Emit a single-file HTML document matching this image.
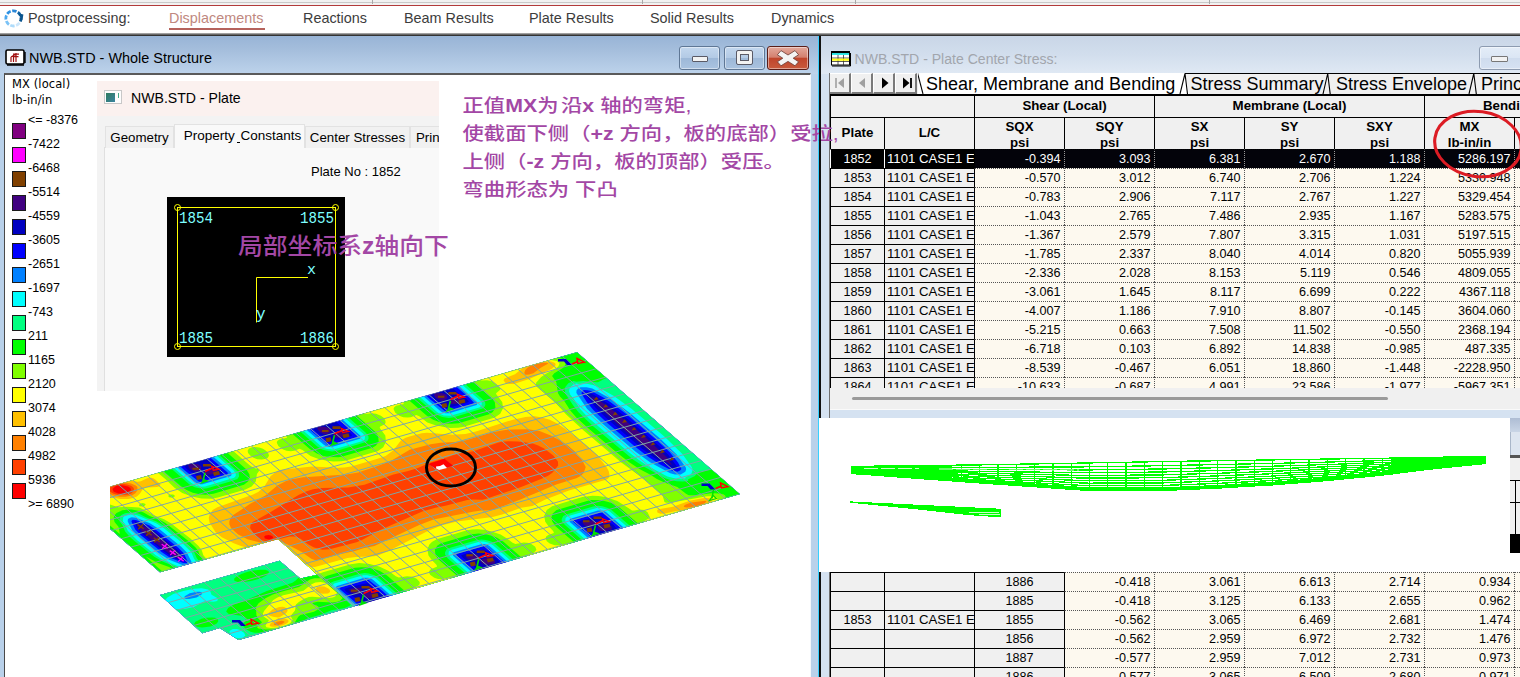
<!DOCTYPE html><html lang="zh"><head><meta charset="utf-8"><title>NWB.STD - Postprocessing</title><style>
*{box-sizing:border-box;margin:0;padding:0}
html,body{width:1520px;height:677px;overflow:hidden;background:#fff;font-family:"Liberation Sans","Noto Sans CJK SC",sans-serif}
body{position:relative}
body>div,body>svg{position:absolute}
#topstrip{left:0;top:0;width:1520px;height:5px;background:#f1f1f1}
#topline1{left:0;top:2px;width:1520px;height:1px;background:#c9c9c9}
.tsep{top:0;width:1px;height:4px;background:#a8a8a8}
#redline{left:0;top:5px;width:1520px;height:1px;background:#b23a3a}
#menubar{left:0;top:6px;width:1520px;height:27px;background:#fff}
#menubar .mi{position:absolute;top:4px;font-size:14.4px;line-height:17px;color:#3c3c3c;white-space:nowrap}
#menubar .mi.act{color:#c08880}
#actline{position:absolute;left:169px;top:22px;width:96px;height:2px;background:#b5625c}
#ppicon{position:absolute;left:3.3px;top:2px}
#menushadow{left:0;top:33px;width:1520px;height:3px;background:linear-gradient(#bdbdbd,#555 60%,#1a1a1a)}
#lwin{left:0;top:36px;width:819px;height:641px;background:#b9d1ea;border-right:1px solid #38d0ff}
#ltitle{position:absolute;left:0;top:0;width:818px;height:38px;background:linear-gradient(#98b4d6 0%,#a6bfdd 40%,#bdd3eb 100%)}
#licon{position:absolute;left:5px;top:13px}
.wt{position:absolute;left:29px;top:14px;font-size:14.45px;line-height:17px;color:#000;white-space:nowrap}
.wt.dim{color:#a2a6ad}
.wb{position:absolute;top:10px;height:24px;border:1px solid #5f7795;border-radius:3px;background:linear-gradient(#c3d7ee 0%,#b3cae5 48%,#9db8d8 52%,#aac3e0 100%);box-shadow:inset 0 0 0 1px rgba(255,255,255,.45)}
.wb.close{border-color:#5a1d18;background:linear-gradient(#e3a99c 0%,#d4806f 46%,#c0452c 52%,#c85a3c 100%)}
.wb.close svg{position:absolute;left:-1px;top:-1px}
.minbar{position:absolute;left:11.5px;top:8.5px;width:16px;height:6px;background:#f2f2f2;border:1px solid #5a5a66;border-radius:1px}
.maxbox{position:absolute;left:12px;top:4px;width:15px;height:13px;border:3.4px solid #f2f2f2;outline:1px solid #5a5a66;box-shadow:inset 0 0 0 1px #5a5a66;border-radius:1px}
#lclient{position:absolute;left:4px;top:37px;width:807px;height:604px;background:#fff;border-left:1px solid #4a4a4a;border-top:2px solid #5a5a5a;border-right:1px solid #f4f8fc;overflow:hidden}
#lclient>*{position:absolute}
#legend{left:0;top:0;width:96px;height:470px;font-family:"DejaVu Sans","Liberation Sans",sans-serif}
#legend>*{position:absolute}
.lt{left:7px;font-size:11.5px;line-height:14px;color:#000;white-space:nowrap;letter-spacing:0.1px}
.ll{left:23px;font-size:12.5px;line-height:14px;color:#000;white-space:nowrap;font-family:'Liberation Sans',sans-serif}
.ls{left:7px;width:14px;height:16px;border:1px solid #1a1a1a}
#pwin{left:92px;top:6px;width:342px;height:310px;background:#f3f3f3;overflow:hidden}
#ptitle{position:absolute;left:0;top:0;width:342px;height:35px;background:#fbf1ef}
#ptitle span{position:absolute;left:34px;top:9px;font-size:14.1px;line-height:17px;color:#000;white-space:nowrap}
#picon{position:absolute;left:7px;top:9px;width:18px;height:14px;border:1px solid #c8c8c8;background:#fdfdfd}
#picon i{position:absolute;left:1px;top:2px;width:9px;height:9px;background:linear-gradient(135deg,#2f7a5e,#3a83a0)}
#picon b{position:absolute;left:13px;top:2px;width:1px;height:5px;background:#4a8}
#pbody{position:absolute;left:0;top:35px;width:342px;height:275px;background:#f3f3f3}
#ppanel{position:absolute;left:7px;top:31px;width:335px;height:244px;background:#f9f9f9;border-left:1px solid #e0e0e0;border-top:1px solid #dedede}
.tab{position:absolute;top:10px;height:22px;font-size:13.3px;line-height:22px;text-align:center;color:#000;background:#f1f1f1;border:1px solid #e2e2e2;border-bottom:none;white-space:nowrap;overflow:hidden}
.tab.on{top:8px;height:24px;background:#f9f9f9;line-height:22px;z-index:2;font-size:13.5px;padding-left:6px}
.tab u{text-decoration:none;display:inline-block;width:3px;height:1px;background:#000;vertical-align:-3px;margin:0 0 0 -1px}
#pno{position:absolute;left:214px;top:48px;font-size:13px;line-height:15px;white-space:nowrap}
#pbox{position:absolute;left:70px;top:81px;width:178px;height:160px}
#note1{left:238px;top:233px;z-index:5;transform:scaleY(0.93);transform-origin:0 0;font-weight:500;font-size:24.8px;line-height:30px;color:#a347a5;white-space:nowrap;font-family:"Liberation Sans","Noto Sans CJK SC",sans-serif}
#note2{left:462.5px;top:92px;z-index:5;font-weight:500;font-size:21.33px;line-height:32.94px;transform:scaleY(0.85);transform-origin:0 0;color:#a347a5;white-space:nowrap}
#note2 div{height:32.94px}#note2 i{display:inline-block;width:2.5px}
#rwin{left:819px;top:36px;width:701px;height:641px;background:#d5e2f1;border-left:2px solid #111}
#rtitle{position:absolute;left:0px;top:0;width:700px;height:38px;background:linear-gradient(#c9d6e7 0%,#d2deed 50%,#e0e9f4 100%)}
#ricon{position:absolute;left:9.5px;top:15px}
#rtitle .wt{left:33.5px;top:14.5px;font-size:14.05px}
#rclient{position:absolute;left:8px;top:37px;width:691px;height:604px;background:#d5e2f1;overflow:hidden;border-left:1px solid #707070}
#rclient>*{position:absolute}
#tabrow{left:0;top:0;width:690px;height:21px;background:#f0f0f0}
.nb{position:absolute;top:0;margin-left:-1px;width:22px;height:21px;background:#f0f0f0;border:1px solid #fff;border-right:2px solid #7a7a7a;border-bottom:2px solid #7a7a7a}
.nb svg{position:absolute;left:0;top:0}
#tabs{position:absolute;left:88px;top:0;width:620px;height:21px;overflow:hidden}
#tabs span{position:absolute;top:1px;margin-left:-1px;font-size:18px;line-height:21px;color:#000;white-space:nowrap}
#ttab{left:0;top:21px;width:690px;height:294px;overflow:hidden;background:#fdf9ef;border-top:1px solid #000}
#ttab>*,#btab>*{position:absolute}
.hc{background:#f0f0f0;border-left:1px solid #000;border-top:1px solid #000;font-weight:bold;font-size:13.3px;line-height:20px;text-align:center;color:#000;white-space:nowrap;overflow:hidden}
.hc.h1{line-height:30px}
.hc.h2{line-height:15px;padding-top:1px}
.hc.h2 div{height:16px}
.rc{height:19px;background:#f0f0f0;border-left:1px solid #000;border-top:1px solid #000;font-size:12.6px;line-height:18.5px;text-align:center;color:#000;white-space:nowrap;overflow:hidden}
.rc.lc{text-align:left;padding-left:2px;font-size:13.2px}
.rc.sel{background:#000;color:#fff;border-left-color:#fff}
.dc{height:19px;background:#fdf9ef;border-left:1px dotted #555;border-top:1px dotted #555;font-size:12.6px;line-height:18.5px;text-align:right;padding-right:3.5px;color:#000;white-space:nowrap;overflow:hidden}
.dc.sel{background:#03030a;color:#fff;border-left-color:#999;border-top-color:#000}
#hscroll{left:0;top:315px;width:690px;height:22px;background:#f0f0f0;border-bottom:1px solid #fafafa}
#thumb{position:absolute;left:22px;top:9px;width:536px;height:3px;border-radius:2px;background:#9a9a9a}
#white{left:819px;top:418px;width:701px;height:154px;background:#fff;z-index:3}
#art{left:1510px;top:418px;width:10px;height:154px;z-index:4}
#art div{position:absolute;left:0;width:10px}
#btab{left:0;top:499px;width:690px;height:105px;overflow:hidden;background:#fdf9ef}
#redcirc{left:592px;top:36px}

#vline{left:819px;top:118px;width:2px;height:40px;background:#111;z-index:6}
.wb.dimb{border-color:#8d9bb0;background:linear-gradient(#e4edf8 0%,#dbe6f4 48%,#cfdcee 52%,#d6e2f2 100%)}
.wb.dimb .minbar{border-color:#777}
.dc.f1{border-left:1px solid #000}

</style></head><body>
<div id="topstrip"></div><div id="topline1"></div><div class="tsep" style="left:372px"></div><div class="tsep" style="left:642px"></div><div class="tsep" style="left:855px"></div><div class="tsep" style="left:1209px"></div><div id="redline"></div>
<div id="menubar">
<svg id="ppicon" width="21" height="21" viewBox="0 0 21 21"><g fill="none"><path d="M9.21 2.89A7.6 7.6 0 0 1 13.49 3.46" stroke="#2a86d6" stroke-width="2.8"/><path d="M14.87 4.25A7.6 7.6 0 0 1 17.50 7.68" stroke="#0f64a8" stroke-width="2.8"/><path d="M17.91 9.21A7.6 7.6 0 0 1 17.34 13.49" stroke="#0a558f" stroke-width="2.8"/><path d="M16.55 14.87A7.6 7.6 0 0 1 13.12 17.50" stroke="#cbe6fb" stroke-width="2.8"/><path d="M11.59 17.91A7.6 7.6 0 0 1 7.31 17.34" stroke="#aedbfa" stroke-width="2.8"/><path d="M5.93 16.55A7.6 7.6 0 0 1 3.30 13.12" stroke="#7cc3f6" stroke-width="2.8"/><path d="M2.89 11.59A7.6 7.6 0 0 1 3.46 7.31" stroke="#4aa7ef" stroke-width="2.8"/><path d="M4.25 5.93A7.6 7.6 0 0 1 7.68 3.30" stroke="#2f92e3" stroke-width="2.8"/></g><path d="M15.2 5.2L20.4 6.6L19.4 12.2L17.2 9.2Z" fill="#0a558f"/></svg>
<span class="mi" style="left:28px">Postprocessing:</span>
<span class="mi act" style="left:169px">Displacements</span>
<span class="mi" style="left:303px">Reactions</span>
<span class="mi" style="left:404px">Beam Results</span>
<span class="mi" style="left:529px">Plate Results</span>
<span class="mi" style="left:650px">Solid Results</span>
<span class="mi" style="left:771px">Dynamics</span>
<div id="actline"></div>
</div><div id="menushadow"></div>
<div id="lwin"><div id="ltitle"><svg id="licon" width="22" height="18" viewBox="0 0 22 18"><rect x="1" y="1" width="18" height="14" rx="1.5" fill="#fff" stroke="#000" stroke-width="1.6"/><path d="M2 16 H19 M20 3 V14" stroke="#000" stroke-width="1.4" fill="none"/><path d="M6 13 V8 M8.5 13 V6.5 M11 13 V5 M6 8 L11 5 M8 5.2 H14 M9 7.6 H13.5 M11 5 V4" stroke="#a01010" stroke-width="1.2" fill="none"/></svg><span class="wt">NWB.STD - Whole Structure</span>
<div class="wb" style="left:679px;width:41px"><div class="minbar"></div></div>
<div class="wb" style="left:723.5px;width:41px"><div class="maxbox"></div></div>
<div class="wb close" style="left:767px;width:42px"><svg width="42" height="24" viewBox="0 0 42 24"><path d="M14 4.6 L21 9.0 L28 4.6 L31.6 8.8 L26.2 12.2 L31.6 15.8 L28 19.8 L21 15.4 L14 19.8 L10.4 15.8 L15.8 12.2 L10.4 8.8 Z" fill="#f4f4f4" stroke="#6a3a32" stroke-width="0.8"/></svg></div>
</div>
<div id="lclient">
<div id="legend"><div class="lt" style="top:2px">MX (local)</div><div class="lt" style="top:18px">lb-in/in</div>
<div class="ll" style="top:37.5px">&lt;= -8376</div>
<div class="ls" style="top:48px;background:#800080"></div>
<div class="ll" style="top:61.5px">-7422</div>
<div class="ls" style="top:72px;background:#ff00ff"></div>
<div class="ll" style="top:85.5px">-6468</div>
<div class="ls" style="top:96px;background:#804000"></div>
<div class="ll" style="top:109.5px">-5514</div>
<div class="ls" style="top:120px;background:#400080"></div>
<div class="ll" style="top:133.5px">-4559</div>
<div class="ls" style="top:144px;background:#0000c0"></div>
<div class="ll" style="top:157.5px">-3605</div>
<div class="ls" style="top:168px;background:#0000ff"></div>
<div class="ll" style="top:181.5px">-2651</div>
<div class="ls" style="top:192px;background:#0080ff"></div>
<div class="ll" style="top:205.5px">-1697</div>
<div class="ls" style="top:216px;background:#00ffff"></div>
<div class="ll" style="top:229.5px">-743</div>
<div class="ls" style="top:240px;background:#00ff80"></div>
<div class="ll" style="top:253.5px">211</div>
<div class="ls" style="top:264px;background:#00ff00"></div>
<div class="ll" style="top:277.5px">1165</div>
<div class="ls" style="top:288px;background:#80ff00"></div>
<div class="ll" style="top:301.5px">2120</div>
<div class="ls" style="top:312px;background:#ffff00"></div>
<div class="ll" style="top:325.5px">3074</div>
<div class="ls" style="top:336px;background:#ffc000"></div>
<div class="ll" style="top:349.5px">4028</div>
<div class="ls" style="top:360px;background:#ff8000"></div>
<div class="ll" style="top:373.5px">4982</div>
<div class="ls" style="top:384px;background:#ff4000"></div>
<div class="ll" style="top:397.5px">5936</div>
<div class="ls" style="top:408px;background:#ff0000"></div>
<div class="ll" style="top:421.5px">&gt;= 6890</div>
</div>
<svg id="plot" width="700" height="320" viewBox="100 345 700 320" style="left:95px;top:270px">
<defs><clipPath id="crop"><rect x="110" y="345" width="700" height="320"/></clipPath><clipPath id="slab"><path d="M-0.00 0.00L34.50 0.00L34.50 9.55L26.45 9.62L26.54 14.09L27.64 13.98L27.65 11.72L35.83 11.70L35.92 16.51L34.71 16.48L34.45 18.15L0.00 18.00Z"/></clipPath></defs>
<g clip-path="url(#crop)"><g transform="matrix(-14.5938 4.2031 9.0556 7.8889 577.00 352.00)"><g clip-path="url(#slab)">
<rect x="-1" y="-1" width="39" height="21" fill="#400080"/>
<path d="M-0.50 -0.50L37.00 -0.50L37.00 19.00L-0.50 19.00ZM1.90 4.61L1.80 4.84L1.70 5.34L1.60 6.20L1.52 10.00L1.60 12.50L1.80 13.41L2.00 12.53L2.10 11.67L2.17 8.10L2.10 5.70ZM8.66 1.40L8.68 1.60L8.90 1.66L9.30 1.62L9.55 1.50L9.45 1.20L9.10 1.06L8.80 1.09ZM9.70 0.06L9.39 0.20L9.25 0.50L9.40 0.83L9.70 0.95L9.80 0.95L9.90 0.82L9.98 0.50L9.90 0.18L9.80 0.06ZM16.66 1.40L16.68 1.60L16.90 1.66L17.30 1.62L17.55 1.50L17.45 1.20L17.10 1.06L16.80 1.09ZM17.70 0.06L17.39 0.20L17.25 0.50L17.40 0.83L17.70 0.95L17.80 0.95L17.90 0.82L17.98 0.50L17.90 0.18L17.80 0.06ZM24.60 17.25L24.55 17.60L24.70 17.87L25.10 17.85L25.30 17.72L25.38 17.60L25.35 17.30L25.20 17.15L24.70 17.13ZM25.12 16.50L25.15 16.80L25.30 16.99L25.50 17.06L25.70 17.04L25.86 16.70L25.80 16.37L25.40 16.37ZM25.51 1.40L25.54 1.60L25.70 1.65L26.10 1.63L26.40 1.50L26.37 1.30L26.30 1.20L26.00 1.06L25.60 1.11ZM26.50 0.07L26.30 0.15L26.16 0.30L26.12 0.60L26.30 0.88L26.50 0.95L26.70 0.94L26.83 0.60L26.83 0.40L26.70 0.07ZM32.80 4.21L32.60 4.67L32.50 5.15L32.40 6.79L32.40 8.10L32.47 8.60L32.60 8.99L32.80 8.53L32.90 8.05L33.00 6.41L33.00 5.10L32.93 4.60ZM8.60 17.25L8.55 17.60L8.70 17.87L9.10 17.85L9.30 17.72L9.38 17.60L9.35 17.30L9.20 17.15L8.70 17.13ZM9.12 16.50L9.15 16.80L9.30 16.99L9.50 17.06L9.70 17.04L9.86 16.70L9.80 16.37L9.40 16.37ZM16.60 17.25L16.55 17.60L16.70 17.87L17.10 17.85L17.30 17.72L17.38 17.60L17.35 17.30L17.20 17.15L16.70 17.13ZM17.12 16.50L17.15 16.80L17.30 16.99L17.50 17.06L17.70 17.04L17.86 16.70L17.80 16.37L17.40 16.37Z" fill="#0000c0" fill-rule="evenodd"/>
<path d="M-0.50 -0.50L8.55 -0.50L8.54 0.80L8.46 1.40L8.48 1.70L8.54 1.80L9.00 1.84L10.00 1.76L10.06 1.70L10.07 1.10L10.17 0.50L10.05 -0.50L16.55 -0.50L16.54 0.80L16.46 1.40L16.48 1.70L16.54 1.80L17.00 1.84L18.00 1.76L18.06 1.70L18.07 1.10L18.17 0.50L18.05 -0.50L25.40 -0.50L25.39 0.80L25.32 1.60L25.40 1.80L25.80 1.84L26.80 1.76L26.91 1.70L26.92 1.10L27.02 0.50L26.90 -0.50L37.00 -0.50L37.00 19.00L25.95 19.00L25.96 17.30L26.05 16.50L26.00 16.20L25.60 16.16L24.50 16.25L24.45 16.30L24.44 16.90L24.34 17.50L24.44 18.10L24.45 19.00L17.95 19.00L17.96 17.30L18.05 16.50L18.00 16.20L17.60 16.16L16.50 16.25L16.45 16.30L16.44 16.90L16.34 17.50L16.44 18.10L16.45 19.00L9.95 19.00L9.96 17.30L10.05 16.50L10.00 16.20L9.60 16.16L8.50 16.25L8.45 16.30L8.44 16.90L8.34 17.50L8.44 18.10L8.45 19.00L-0.50 19.00ZM1.90 4.11L1.77 4.20L1.65 4.60L1.43 5.80L1.35 7.00L1.32 11.20L1.38 12.30L1.59 13.50L1.67 13.80L1.80 13.87L1.91 13.80L2.06 13.30L2.27 12.20L2.36 11.00L2.40 7.00L2.34 5.80L2.15 4.70L2.01 4.20ZM32.80 3.99L32.57 4.40L32.42 4.90L32.34 5.50L32.26 7.90L32.33 8.50L32.60 9.21L32.83 8.80L32.98 8.30L33.06 7.70L33.14 5.30L33.07 4.70Z" fill="#0000ff" fill-rule="evenodd"/>
<path d="M-0.50 -0.50L8.28 -0.50L8.25 1.50L8.30 2.00L8.40 2.06L10.20 2.06L10.30 2.00L10.36 0.50L10.32 -0.50L16.28 -0.50L16.25 1.50L16.30 2.00L16.40 2.06L18.20 2.06L18.30 2.00L18.36 0.50L18.32 -0.50L25.12 -0.50L25.12 1.90L25.20 2.05L27.00 2.06L27.14 2.00L27.21 0.50L27.18 -0.50L37.00 -0.50L37.00 19.00L26.22 19.00L26.23 16.10L26.20 15.99L26.10 15.94L24.30 15.94L24.20 16.00L24.14 17.50L24.18 19.00L18.22 19.00L18.23 16.10L18.20 15.99L18.10 15.94L16.30 15.94L16.20 16.00L16.14 17.50L16.18 19.00L10.22 19.00L10.23 16.10L10.20 15.99L10.10 15.94L8.30 15.94L8.20 16.00L8.14 17.50L8.18 19.00L-0.50 19.00ZM1.90 3.82L1.70 3.93L1.57 4.10L1.35 5.00L1.23 5.70L1.14 7.20L1.10 10.50L1.15 12.10L1.33 13.30L1.53 14.00L1.70 14.12L1.90 14.16L2.13 13.90L2.37 13.00L2.53 12.00L2.61 10.50L2.64 7.60L2.59 6.00L2.45 5.00L2.23 4.10L2.10 3.91ZM32.80 3.78L32.64 3.90L32.28 4.80L32.18 5.50L32.10 7.70L32.15 8.40L32.44 9.30L32.60 9.42L32.76 9.30L33.12 8.40L33.22 7.70L33.30 5.50L33.25 4.80L32.96 3.90Z" fill="#0080ff" fill-rule="evenodd"/>
<path d="M-0.50 -0.50L8.07 -0.50L8.10 2.07L8.30 2.30L10.20 2.32L10.40 2.23L10.49 2.10L10.53 1.90L10.53 -0.50L16.07 -0.50L16.10 2.07L16.30 2.30L18.20 2.32L18.40 2.23L18.49 2.10L18.53 1.90L18.53 -0.50L24.92 -0.50L24.92 1.90L24.96 2.10L25.10 2.27L25.20 2.31L27.10 2.31L27.20 2.27L27.34 2.10L27.38 1.90L27.38 -0.50L37.00 -0.50L37.00 19.00L26.43 19.00L26.42 16.00L26.33 15.80L26.20 15.70L24.30 15.68L24.10 15.77L24.01 15.90L23.97 16.10L23.97 19.00L18.43 19.00L18.42 16.00L18.33 15.80L18.20 15.70L16.30 15.68L16.10 15.77L16.01 15.90L15.97 16.10L15.97 19.00L10.43 19.00L10.42 16.00L10.33 15.80L10.20 15.70L8.30 15.68L8.10 15.77L8.01 15.90L7.97 16.10L7.97 19.00L-0.50 19.00ZM1.90 3.46L1.60 3.63L1.37 3.90L1.04 5.30L0.89 7.20L0.84 10.50L0.93 12.50L1.23 14.00L1.33 14.20L1.50 14.37L1.90 14.52L2.20 14.35L2.36 14.10L2.75 12.50L2.87 11.10L2.92 7.60L2.84 5.70L2.46 3.90L2.30 3.65L2.10 3.51ZM32.80 3.52L32.70 3.54L32.51 3.70L32.12 4.60L31.97 5.50L31.90 7.70L31.95 8.40L32.25 9.40L32.40 9.60L32.60 9.68L32.70 9.66L32.89 9.50L33.28 8.60L33.43 7.70L33.50 5.50L33.45 4.80L33.15 3.80L33.00 3.60ZM33.54 12.60L33.56 12.70L33.70 12.83L34.10 12.94L34.58 12.90L34.74 12.80L34.78 12.70L34.64 12.50L34.20 12.35L33.74 12.40L33.59 12.50Z" fill="#00ffff" fill-rule="evenodd"/>
<path d="M-0.50 -0.50L7.85 -0.50L7.85 1.90L7.89 2.20L8.10 2.50L8.30 2.60L10.30 2.60L10.60 2.39L10.71 2.20L10.75 1.90L10.75 -0.50L15.85 -0.50L15.85 1.90L15.89 2.20L16.10 2.50L16.30 2.60L18.30 2.60L18.60 2.39L18.71 2.20L18.75 1.90L18.75 -0.50L24.69 -0.50L24.69 1.90L24.75 2.20L24.90 2.44L25.10 2.58L27.10 2.60L27.30 2.53L27.50 2.32L27.61 1.90L27.61 -0.50L37.00 -0.50L37.00 19.00L26.55 19.00L26.50 15.61L26.20 15.40L24.20 15.40L24.00 15.50L23.80 15.79L23.75 16.10L23.75 19.00L18.65 19.00L18.65 16.10L18.61 15.80L18.40 15.50L18.20 15.40L16.20 15.40L16.00 15.50L15.80 15.79L15.75 16.10L15.75 19.00L10.65 19.00L10.65 16.10L10.61 15.80L10.40 15.50L10.20 15.40L8.20 15.40L8.00 15.50L7.80 15.79L7.75 16.10L7.75 19.00L-0.50 19.00ZM1.90 2.98L1.80 3.10L1.50 3.20L1.37 3.30L1.10 3.62L0.99 3.90L0.70 5.20L0.55 6.90L0.49 10.50L0.60 12.60L0.90 14.14L1.01 14.40L1.27 14.70L1.40 14.80L1.80 14.90L1.90 15.02L2.37 14.80L2.70 14.34L3.10 12.72L3.20 12.00L3.26 10.90L3.30 6.60L3.20 5.46L2.92 4.30L2.88 3.90L2.72 3.50L2.50 3.23L2.11 3.00ZM32.80 3.18L32.60 3.21L32.30 3.47L31.80 4.77L31.70 5.40L31.62 7.30L31.70 8.50L31.95 9.20L32.00 9.53L32.26 9.90L32.40 9.99L32.60 10.02L32.80 9.99L33.10 9.73L33.60 8.43L33.70 7.80L33.78 5.90L33.70 4.70L33.45 4.00L33.40 3.67L33.14 3.30L33.00 3.21ZM33.04 12.50L33.02 12.70L33.17 13.10L33.06 13.60L33.18 13.80L33.30 13.85L33.50 13.82L33.80 13.59L34.00 13.53L34.80 13.77L35.40 13.73L35.70 13.60L35.90 13.45L36.08 13.20L36.14 13.00L36.12 12.70L35.90 12.35L35.60 12.14L35.10 11.99L34.40 11.97L33.70 12.06L33.30 12.22ZM34.10 16.96L33.90 17.06L33.81 17.20L33.74 17.60L33.83 17.90L34.10 18.05L34.30 18.00L34.42 17.90L34.53 17.70L34.56 17.50L34.53 17.30L34.42 17.10L34.30 17.01Z" fill="#00ff80" fill-rule="evenodd"/>
<path d="M-0.50 -0.50L7.65 -0.50L7.65 1.90L7.72 2.30L7.83 2.50L8.00 2.68L8.20 2.79L10.20 2.83L10.50 2.76L10.77 2.50L10.88 2.30L10.95 1.90L10.95 -0.50L15.65 -0.50L15.65 1.90L15.72 2.30L15.83 2.50L16.00 2.68L16.20 2.79L18.20 2.83L18.50 2.76L18.77 2.50L18.88 2.30L18.95 1.90L18.95 -0.50L24.51 -0.50L24.54 2.20L24.77 2.60L25.00 2.78L25.40 2.83L27.10 2.83L27.30 2.78L27.50 2.63L27.68 2.40L27.79 2.00L27.79 -0.50L37.00 -0.50L37.00 10.66L27.09 10.70L27.10 13.60L27.40 13.68L28.00 14.06L28.30 14.18L30.10 14.25L31.60 14.54L32.60 14.65L33.10 14.81L33.41 15.10L33.42 15.40L32.90 15.91L32.80 16.20L32.87 16.40L33.30 16.79L33.40 16.96L33.43 17.30L33.35 17.70L33.20 17.90L33.00 18.02L32.00 18.34L31.50 18.39L30.90 18.36L29.60 17.97L28.80 17.98L27.90 17.86L27.10 18.00L26.70 17.93L26.60 17.88L26.50 15.32L26.40 15.24L26.10 15.17L24.30 15.17L24.00 15.24L23.82 15.40L23.62 15.70L23.56 16.00L23.55 19.00L18.85 19.00L18.85 16.10L18.78 15.70L18.67 15.50L18.40 15.24L18.10 15.17L16.30 15.17L16.00 15.24L15.82 15.40L15.62 15.70L15.56 16.00L15.55 19.00L10.85 19.00L10.85 16.10L10.78 15.70L10.67 15.50L10.40 15.24L10.10 15.17L8.30 15.17L8.00 15.24L7.82 15.40L7.62 15.70L7.56 16.00L7.55 19.00L-0.50 19.00L-0.50 14.93L0.10 14.89L0.80 14.76L1.30 15.07L1.80 15.18L1.90 15.33L2.20 15.25L2.50 15.05L2.73 14.80L2.95 14.40L3.34 12.70L3.46 11.80L3.55 7.60L3.48 5.80L3.36 5.00L3.05 3.60L2.70 3.04L2.30 2.75L1.90 2.66L1.80 2.82L1.40 2.94L0.80 3.42L0.70 3.45L0.20 3.32L-0.50 3.27ZM32.80 2.95L32.50 3.02L32.30 3.17L32.12 3.40L31.97 3.90L31.67 4.60L31.53 5.30L31.44 7.20L31.45 7.90L31.52 8.50L31.77 9.20L31.83 9.60L32.10 10.03L32.30 10.18L32.60 10.25L32.90 10.18L33.10 10.03L33.28 9.80L33.43 9.30L33.73 8.60L33.87 7.90L33.96 6.00L33.96 5.30L33.88 4.70L33.63 4.00L33.57 3.60L33.30 3.17L33.10 3.02ZM36.40 0.60L36.23 0.70L36.17 0.90L36.23 1.10L36.40 1.20L36.57 1.10L36.63 0.90L36.57 0.70ZM28.83 12.40L28.93 12.20L29.20 12.04L29.60 11.93L30.00 11.90L30.40 11.93L30.80 12.04L31.07 12.20L31.17 12.40L31.07 12.60L30.80 12.76L30.40 12.87L30.00 12.90L29.60 12.87L29.20 12.76L28.93 12.60ZM34.29 15.60L34.35 15.40L34.50 15.27L34.80 15.14L35.10 15.10L35.60 15.23L35.79 15.40L35.85 15.60L35.79 15.80L35.60 15.97L35.10 16.10L34.60 15.98L34.38 15.80Z" fill="#00ff00" fill-rule="evenodd"/>
<path d="M1.20 0.20L1.35 -0.00L1.60 -0.19L2.33 -0.50L7.10 -0.50L7.11 2.10L7.20 2.53L7.50 3.08L7.88 3.40L8.20 3.52L10.30 3.53L10.70 3.41L11.00 3.20L11.28 2.80L11.41 2.50L11.50 1.92L11.50 -0.50L15.10 -0.50L15.11 2.10L15.20 2.53L15.50 3.08L15.88 3.40L16.20 3.52L18.20 3.53L18.50 3.50L19.00 3.20L19.20 2.94L19.40 2.53L19.50 1.92L19.50 -0.50L23.96 -0.50L23.97 2.10L24.10 2.66L24.30 3.02L24.60 3.32L25.00 3.51L27.10 3.53L27.58 3.40L27.84 3.20L28.10 2.86L28.28 2.40L28.34 1.90L28.34 -0.50L34.26 -0.50L33.93 0.30L33.84 0.90L33.90 1.42L34.30 2.70L34.30 4.79L33.95 4.10L33.86 3.50L33.67 3.10L33.50 2.89L33.23 2.70L32.77 2.60L32.40 2.70L32.24 2.80L31.90 3.19L31.80 3.40L31.70 3.90L31.40 4.56L31.30 5.00L31.17 7.50L31.20 8.19L31.28 8.60L31.48 9.10L31.55 9.60L31.70 10.01L32.04 10.40L32.20 10.50L32.58 10.60L31.50 10.65L27.10 10.65L27.05 10.70L27.07 14.00L27.00 14.08L26.56 14.10L26.60 14.52L26.90 14.36L27.20 14.35L28.20 14.76L29.40 14.73L30.00 14.77L30.60 14.91L31.25 15.20L31.62 15.50L32.08 16.30L32.16 16.60L32.19 17.10L32.71 17.40L32.76 17.50L32.74 17.60L32.45 17.90L32.10 18.08L31.70 18.17L31.20 18.18L30.80 18.11L30.50 18.00L30.00 17.57L29.80 17.47L28.90 17.52L28.52 17.40L28.37 17.20L28.40 17.00L28.51 16.80L28.50 16.70L28.40 16.64L28.10 16.68L27.40 17.14L27.10 17.21L26.90 17.19L26.60 17.00L26.54 14.60L26.50 14.55L26.10 14.47L24.20 14.47L23.80 14.59L23.50 14.80L23.22 15.20L23.09 15.50L23.00 16.09L23.00 19.00L19.40 19.00L19.40 16.00L19.30 15.48L19.00 14.92L18.62 14.60L18.30 14.48L16.20 14.47L15.80 14.59L15.50 14.80L15.22 15.20L15.09 15.50L15.00 16.09L15.00 19.00L11.40 19.00L11.40 16.00L11.30 15.48L11.10 15.06L10.80 14.72L10.40 14.50L8.30 14.47L8.00 14.50L7.50 14.80L7.22 15.20L7.09 15.50L7.00 16.08L7.00 19.00L2.76 19.00L2.70 18.78L2.50 18.60L1.60 18.33L1.20 18.15L1.00 18.00L0.87 17.80L0.87 17.60L1.00 17.40L1.40 17.15L2.38 16.90L2.71 16.70L2.77 16.50L2.81 15.60L3.20 14.87L3.40 14.30L3.47 13.70L3.70 12.86L3.83 11.90L3.90 10.60L3.93 7.60L3.90 6.21L3.81 5.40L3.55 4.30L3.51 3.80L3.41 3.40L2.85 2.30L2.70 1.60L2.43 1.40L1.70 1.14L1.35 0.90L1.16 0.60L1.14 0.40ZM34.30 7.61L34.34 10.60L32.62 10.60L33.00 10.51L33.16 10.40L33.51 10.00L33.64 9.70L33.72 9.30L34.06 8.60Z" fill="#80ff00" fill-rule="evenodd"/>
<path d="M1.57 0.30L1.80 0.04L2.20 -0.16L2.70 -0.26L3.70 -0.37L3.98 -0.50L6.71 -0.50L6.68 -0.10L6.60 0.10L6.30 0.22L6.10 0.46L6.05 1.10L6.10 1.35L6.19 1.50L6.60 1.70L6.65 1.80L6.80 2.70L7.11 3.30L7.60 3.77L8.10 3.98L10.30 4.01L10.60 3.96L11.00 3.76L11.30 3.50L11.63 3.10L11.87 2.60L11.93 1.80L12.00 1.60L12.40 1.65L12.60 1.60L12.80 1.44L12.90 1.23L12.95 0.80L12.82 0.40L12.70 0.26L12.50 0.16L12.00 0.21L11.91 -0.00L11.89 -0.50L14.71 -0.50L14.65 -0.00L14.55 0.10L14.20 0.20L14.00 0.37L13.87 0.70L13.85 1.00L13.93 1.30L14.05 1.50L14.20 1.61L14.54 1.70L14.64 1.80L14.81 2.70L15.14 3.30L15.60 3.75L16.10 3.97L18.30 4.00L18.60 3.95L19.00 3.75L19.30 3.50L19.63 3.10L19.87 2.60L19.93 1.80L20.00 1.60L20.40 1.65L20.60 1.60L20.80 1.44L20.90 1.23L20.95 0.80L20.82 0.40L20.70 0.26L20.50 0.16L20.00 0.21L19.92 -0.00L19.89 -0.50L23.56 -0.50L23.55 1.80L23.50 2.15L23.35 2.40L23.39 2.60L23.70 2.85L24.20 3.53L24.70 3.88L25.20 4.00L27.10 4.02L27.50 3.95L28.00 3.66L28.39 3.20L28.66 2.60L28.76 1.90L28.71 0.80L28.74 -0.50L33.19 -0.50L33.36 0.60L33.31 1.10L33.20 1.45L32.79 2.20L32.30 2.42L31.74 2.80L31.54 3.40L31.47 3.90L31.15 4.60L31.03 5.20L30.94 7.20L30.96 8.10L31.05 8.60L31.25 9.10L31.35 9.80L31.52 10.20L31.86 10.60L27.10 10.62L27.02 10.70L27.02 14.00L26.60 14.01L26.50 14.06L26.10 14.01L24.20 14.01L23.70 14.13L23.20 14.50L22.86 15.00L22.64 15.70L22.59 16.40L22.52 16.60L22.00 16.69L21.76 16.90L21.66 17.20L21.70 17.60L21.83 17.80L22.00 17.91L22.52 18.00L22.60 18.27L22.61 19.00L19.79 19.00L19.80 18.27L19.88 18.00L20.40 17.91L20.57 17.80L20.70 17.60L20.74 17.20L20.64 16.90L20.40 16.69L19.88 16.60L19.81 16.40L19.77 15.80L19.67 15.30L19.37 14.70L19.00 14.30L18.70 14.11L18.30 13.99L16.20 13.97L15.90 14.03L15.60 14.16L15.30 14.39L15.03 14.70L14.73 15.30L14.63 15.80L14.59 16.40L14.52 16.60L14.00 16.69L13.83 16.80L13.70 17.00L13.66 17.40L13.80 17.76L14.10 17.95L14.50 17.98L14.57 18.10L14.61 19.00L11.79 19.00L11.80 18.27L11.88 18.00L12.30 17.95L12.57 17.80L12.73 17.50L12.74 17.20L12.64 16.90L12.50 16.74L12.30 16.65L11.88 16.60L11.81 16.40L11.77 15.80L11.67 15.30L11.37 14.70L10.90 14.23L10.40 14.01L8.30 13.97L7.70 14.11L7.40 14.30L7.10 14.60L6.73 15.30L6.53 16.60L6.40 16.67L6.10 16.70L5.87 16.90L5.84 17.20L6.00 17.71L6.10 17.82L6.50 17.94L6.60 18.26L6.61 19.00L4.06 19.00L4.04 18.70L3.90 18.50L3.64 18.40L2.40 18.25L1.90 18.14L1.50 17.93L1.37 17.70L1.47 17.50L1.83 17.30L4.10 16.92L4.32 16.80L4.37 16.70L4.11 16.10L4.07 15.60L4.09 13.70L4.25 11.70L4.30 7.70L4.26 5.70L4.12 4.30L4.12 2.10L3.92 1.80L3.32 1.40L2.84 1.20L2.10 1.01L1.80 0.86L1.57 0.60ZM22.40 0.16L22.20 0.20L22.00 0.37L21.89 0.60L21.85 0.90L21.89 1.20L22.00 1.44L22.20 1.60L22.40 1.64L22.60 1.60L22.80 1.44L22.91 1.20L22.95 0.90L22.91 0.60L22.80 0.37L22.60 0.20ZM29.22 2.50L29.20 2.64L29.30 2.76L29.40 2.79L29.57 2.70L29.60 2.59L29.50 2.44L29.40 2.41ZM31.21 2.60L31.23 2.70L31.40 2.81L31.51 2.80L31.63 2.70L31.63 2.60L31.50 2.47L31.30 2.48ZM26.60 15.10L26.80 14.88L27.10 14.78L27.40 14.85L28.20 15.24L29.50 15.11L29.90 15.17L30.30 15.30L31.40 16.07L31.64 16.30L31.77 16.60L31.72 17.10L32.20 17.50L32.27 17.70L32.09 17.90L31.70 18.04L31.20 18.06L30.80 17.96L30.47 17.70L30.36 17.30L29.81 16.90L29.40 16.35L29.10 16.18L28.60 16.02L28.30 15.99L28.10 16.04L27.30 16.63L27.10 16.69L26.90 16.65L26.60 16.36Z" fill="#ffff00" fill-rule="evenodd"/>
<path d="M32.73 0.20L32.76 0.60L32.54 1.10L32.20 1.49L31.80 1.70L31.50 1.74L31.20 1.68L30.90 1.52L30.50 1.19L30.30 1.10L30.10 1.13L29.60 1.35L29.40 1.32L29.28 1.20L29.25 0.60L29.28 0.40L29.36 0.30L29.60 0.23L30.10 0.34L30.29 0.30L30.90 -0.31L31.30 -0.50L32.00 -0.50L32.20 -0.43L32.50 -0.20ZM1.79 0.40L1.90 0.20L2.30 -0.02L2.80 -0.11L3.30 -0.08L3.80 0.06L4.50 0.41L5.30 0.54L5.47 0.70L5.51 1.00L5.38 1.20L5.15 1.30L4.00 1.26L2.28 0.90L1.91 0.70L1.80 0.53ZM29.26 7.20L29.25 7.90L28.98 8.80L28.75 9.30L28.30 9.90L28.10 10.06L27.00 10.11L26.80 10.19L26.74 10.30L26.58 12.50L26.45 13.10L26.37 13.20L26.20 13.28L24.00 13.33L23.50 13.47L22.50 13.90L22.30 13.93L21.60 13.82L18.30 12.97L17.20 12.80L16.20 12.85L14.10 13.40L13.40 13.42L12.10 13.31L11.40 13.46L10.40 13.20L8.60 12.97L6.00 12.96L5.80 12.86L5.59 12.60L5.40 12.20L5.26 11.70L5.06 10.30L5.04 9.30L5.15 7.00L5.26 6.20L5.41 5.70L5.70 5.22L6.00 4.96L6.50 4.79L7.30 4.69L9.90 4.79L10.60 4.74L11.30 4.47L12.50 3.58L12.80 3.49L13.50 3.44L13.90 3.47L14.30 3.60L15.30 4.35L16.00 4.65L16.70 4.71L18.40 4.71L18.80 4.62L19.20 4.45L20.40 3.64L22.20 3.09L22.40 3.09L23.10 3.40L24.10 4.28L24.70 4.60L25.10 4.68L27.70 4.93L28.10 5.05L28.50 5.37L28.77 5.70L29.00 6.16ZM27.10 15.24L27.30 15.28L27.47 15.40L27.58 15.70L27.40 16.04L27.10 16.18L26.90 16.08L26.80 15.90L26.78 15.70L26.87 15.40ZM30.14 16.30L30.21 16.20L30.40 16.12L30.90 16.17L31.30 16.40L31.40 16.57L31.41 16.70L31.30 16.89L31.10 17.08L31.00 17.11L30.42 16.90L30.20 16.72L30.11 16.50ZM30.70 17.60L30.80 17.37L31.10 17.15L31.80 17.43L31.99 17.60L32.00 17.70L31.94 17.80L31.75 17.90L31.30 17.95L31.01 17.90L30.82 17.80ZM1.72 17.70L1.87 17.50L2.09 17.40L3.00 17.27L4.20 17.37L5.10 17.22L5.25 17.30L5.35 17.50L5.27 17.70L5.10 17.80L4.30 17.86L3.60 18.07L3.10 18.13L2.60 18.11L2.10 18.02L1.85 17.90Z" fill="#ffc000" fill-rule="evenodd"/>
<path d="M31.70 -0.25L32.00 -0.18L32.30 0.02L32.46 0.30L32.47 0.70L32.33 1.00L32.10 1.24L31.80 1.40L31.40 1.46L31.10 1.35L30.80 1.10L30.62 0.80L30.61 0.60L30.74 0.30L31.00 -0.01L31.30 -0.18ZM2.15 0.30L2.19 0.20L2.40 0.09L2.80 0.03L3.20 0.05L3.50 0.15L3.73 0.30L3.92 0.50L4.01 0.70L3.94 0.80L3.80 0.84L3.50 0.83L2.80 0.51ZM28.23 7.30L28.24 8.10L28.04 8.80L27.46 9.60L27.20 9.75L26.60 9.88L26.46 10.00L26.29 10.40L26.00 11.50L25.90 12.40L25.80 12.61L25.67 12.70L25.50 12.73L24.10 12.76L23.20 12.86L22.60 12.83L21.90 12.92L18.40 12.17L17.30 12.03L14.80 12.35L14.30 12.48L13.80 12.72L13.60 12.74L11.59 12.50L8.90 12.06L7.49 12.00L7.14 11.90L6.80 11.70L6.35 11.20L6.12 10.40L6.00 9.40L6.00 8.70L6.10 7.93L6.30 7.19L6.60 6.50L7.10 6.00L7.90 5.60L8.40 5.43L9.10 5.34L11.00 5.37L11.60 5.23L12.40 4.91L13.00 4.78L14.40 4.73L16.00 5.26L16.90 5.38L18.40 5.47L19.10 5.34L21.50 4.42L22.20 4.30L22.60 4.31L23.30 4.49L24.50 5.11L25.81 5.50L27.34 6.10L27.64 6.30L27.92 6.60L28.10 6.90ZM2.17 17.80L2.19 17.70L3.00 17.47L3.41 17.50L3.61 17.60L3.64 17.70L3.56 17.80L3.36 17.90L3.00 17.97L2.40 17.92ZM31.00 17.60L31.10 17.50L31.40 17.46L31.70 17.59L31.72 17.70L31.59 17.80L31.30 17.82L31.01 17.70Z" fill="#ff8000" fill-rule="evenodd"/>
<path d="M31.80 -0.03L32.08 0.10L32.24 0.30L32.30 0.50L32.25 0.80L32.10 1.00L31.70 1.22L31.50 1.28L31.30 1.24L31.07 1.10L30.91 0.90L30.85 0.70L30.87 0.50L31.00 0.28L31.20 0.09L31.50 -0.03ZM27.40 8.52L27.40 9.10L27.35 9.30L27.20 9.50L26.90 9.63L25.70 9.70L25.50 9.79L25.40 9.89L25.28 10.20L25.22 10.90L25.10 11.40L24.80 11.85L24.40 12.01L22.60 12.08L22.15 12.00L20.70 11.57L17.40 10.96L16.50 10.96L15.80 11.05L14.40 11.08L14.10 11.18L13.60 11.47L13.40 11.50L10.90 11.33L9.31 11.10L8.80 10.99L8.40 10.82L7.68 10.30L7.45 9.90L7.33 9.20L7.40 8.30L7.54 7.80L7.69 7.50L8.32 6.90L8.80 6.63L9.20 6.49L9.50 6.47L11.20 6.61L12.00 6.45L12.50 6.43L13.10 6.50L14.20 6.52L15.10 6.70L15.80 6.71L16.70 6.64L18.80 6.82L19.80 6.62L21.20 5.93L21.70 5.83L22.20 5.84L22.80 5.99L25.30 6.86L26.76 7.30L27.02 7.50L27.24 7.80Z" fill="#ff4000" fill-rule="evenodd"/>
<path d="M31.07 0.50L31.30 0.23L31.50 0.14L31.70 0.13L32.02 0.30L32.12 0.60L31.99 0.90L31.70 1.07L31.50 1.11L31.30 1.05L31.12 0.90L31.04 0.70ZM26.60 9.08L26.70 8.98L26.90 8.94L27.02 9.00L27.10 9.20L26.94 9.40L26.70 9.41L26.58 9.30Z" fill="#ff0000" fill-rule="evenodd"/>
<path d="M0.00 0V18M1.01 0V18M2.03 0V18M3.04 0V18M4.06 0V18M5.07 0V18M6.09 0V18M7.10 0V18M8.12 0V18M9.13 0V18M10.15 0V18M11.16 0V18M12.18 0V18M13.19 0V18M14.21 0V18M15.22 0V18M16.24 0V18M17.25 0V18M18.26 0V18M19.28 0V18M20.29 0V18M21.31 0V18M22.32 0V18M23.34 0V18M24.35 0V18M25.37 0V18M26.38 0V18M27.40 0V9.6M28.41 0V9.6M29.43 0V9.6M30.44 0V9.6M31.46 0V9.6M32.47 0V9.6M33.49 0V9.6M34.50 0V9.6M0 0.00H34.5M0 1.06H34.5M0 2.12H34.5M0 3.18H34.5M0 4.24H34.5M0 5.29H34.5M0 6.35H34.5M0 7.41H34.5M0 8.47H34.5M0 9.53H34.5M0 10.59H26.5M0 11.65H26.5M0 12.71H26.5M0 13.76H26.5M0 14.82H26.5M0 15.88H26.5M0 16.94H26.5M0 18.00H26.5M27.65 11.7V16.5M28.68 11.7V16.5M29.71 11.7V16.5M30.74 11.7V16.5M31.77 11.7V16.5M32.81 11.7V16.5M33.84 11.7V16.5M34.87 11.7V16.5M35.90 11.7V16.5M27.65 11.70H35.9M27.65 12.66H35.9M27.65 13.62H35.9M27.65 14.58H35.9M27.65 15.54H35.9M27.65 16.50H35.9M26.50 14.0V18.2M27.51 14.0V18.2M28.52 16.5V18.2M29.54 16.5V18.2M30.55 16.5V18.2M31.56 16.5V18.2M32.58 16.5V18.2M33.59 16.5V18.2M34.60 16.5V18.2M26.5 16.50H34.7M26.5 17.30H34.7M26.5 18.10H34.7M26.5 14.0V18.2M26.5 15.2H27.65" fill="none" stroke="#7ea6a6" stroke-width="1" vector-effect="non-scaling-stroke" shape-rendering="crispEdges"/>
</g></g>
<path d="M205.0 471.5l7.5 -3.4" stroke="#ff0000" stroke-width="1.6" fill="none"/><path d="M211.7 466.1l7.3 3.1l-5.7 1z" stroke="#ff0000" stroke-width="1.3" fill="none"/><path d="M205.0 472.8l-2.1 8.3" stroke="#00e000" stroke-width="1.6" fill="none"/><path d="M199.8 484.2l9.3 -3.1l-5.1 -2.1z" fill="#00e000"/><path d="M203.0 464.0h8v2.6h-8zM192.5 467.8h6.5v2h-6.5zM213.0 472.5l6 -1.5l1 3.5l-6 1.5zM196.0 476.0l5 -1l1 4l-5 1z" fill="#804000"/><path d="M334.5 433.8l7.5 -3.4" stroke="#ff0000" stroke-width="1.6" fill="none"/><path d="M341.2 428.4l7.3 3.1l-5.7 1z" stroke="#ff0000" stroke-width="1.3" fill="none"/><path d="M334.5 435.1l-2.1 8.3" stroke="#00e000" stroke-width="1.6" fill="none"/><path d="M329.3 446.5l9.3 -3.1l-5.1 -2.1z" fill="#00e000"/><path d="M332.5 426.3h8v2.6h-8zM322.0 430.1h6.5v2h-6.5zM342.5 434.8l6 -1.5l1 3.5l-6 1.5zM325.5 438.3l5 -1l1 4l-5 1z" fill="#804000"/><path d="M450.4 399.5l7.5 -3.4" stroke="#ff0000" stroke-width="1.6" fill="none"/><path d="M457.1 394.1l7.3 3.1l-5.7 1z" stroke="#ff0000" stroke-width="1.3" fill="none"/><path d="M450.4 400.8l-2.1 8.3" stroke="#00e000" stroke-width="1.6" fill="none"/><path d="M445.2 412.2l9.3 -3.1l-5.1 -2.1z" fill="#00e000"/><path d="M448.4 392.0h8v2.6h-8zM437.9 395.8h6.5v2h-6.5zM458.4 400.5l6 -1.5l1 3.5l-6 1.5zM441.4 404.0l5 -1l1 4l-5 1z" fill="#804000"/><path d="M363.5 593.5l7.5 -3.4" stroke="#ff0000" stroke-width="1.6" fill="none"/><path d="M370.2 588.1l7.3 3.1l-5.7 1z" stroke="#ff0000" stroke-width="1.3" fill="none"/><path d="M363.5 594.8l-2.1 8.3" stroke="#00e000" stroke-width="1.6" fill="none"/><path d="M358.3 606.2l9.3 -3.1l-5.1 -2.1z" fill="#00e000"/><path d="M361.5 586.0h8v2.6h-8zM351.0 589.8h6.5v2h-6.5zM371.5 594.5l6 -1.5l1 3.5l-6 1.5zM354.5 598.0l5 -1l1 4l-5 1z" fill="#804000"/><path d="M478.8 558.0l7.5 -3.4" stroke="#ff0000" stroke-width="1.6" fill="none"/><path d="M485.5 552.6l7.3 3.1l-5.7 1z" stroke="#ff0000" stroke-width="1.3" fill="none"/><path d="M478.8 559.3l-2.1 8.3" stroke="#00e000" stroke-width="1.6" fill="none"/><path d="M473.6 570.7l9.3 -3.1l-5.1 -2.1z" fill="#00e000"/><path d="M476.8 550.5h8v2.6h-8zM466.3 554.3h6.5v2h-6.5zM486.8 559.0l6 -1.5l1 3.5l-6 1.5zM469.8 562.5l5 -1l1 4l-5 1z" fill="#804000"/><path d="M595.5 524.0l7.5 -3.4" stroke="#ff0000" stroke-width="1.6" fill="none"/><path d="M602.2 518.6l7.3 3.1l-5.7 1z" stroke="#ff0000" stroke-width="1.3" fill="none"/><path d="M595.5 525.3l-2.1 8.3" stroke="#00e000" stroke-width="1.6" fill="none"/><path d="M590.3 536.7l9.3 -3.1l-5.1 -2.1z" fill="#00e000"/><path d="M593.5 516.5h8v2.6h-8zM583.0 520.3h6.5v2h-6.5zM603.5 525.0l6 -1.5l1 3.5l-6 1.5zM586.5 528.5l5 -1l1 4l-5 1z" fill="#804000"/><path d="M558.0 359.0h8l3 3l3 3h-5l-3 -3.4h-6z" fill="#0000c8"/><path d="M572.0 364.0l6 -2.4" stroke="#ff0000" stroke-width="1.6" fill="none"/><path d="M577.0 358.4l7.4 3.8l-6.6 1.2z" stroke="#ff0000" stroke-width="1.4" fill="none"/><path d="M701.5 483.5h8l3 3l3 3h-5l-3 -3.4h-6z" fill="#0000c8"/><path d="M715.5 488.5l6 -2.4" stroke="#ff0000" stroke-width="1.6" fill="none"/><path d="M720.5 482.9l7.4 3.8l-6.6 1.2z" stroke="#ff0000" stroke-width="1.4" fill="none"/><path d="M713.5 489.5l-1.5 9" stroke="#00e000" stroke-width="1.5" fill="none"/><path d="M709.5 500.5l7 -2l-3.5 -3z" fill="none" stroke="#00e000" stroke-width="1.2"/><path d="M232.0 620.0h8l3 3l3 3h-5l-3 -3.4h-6z" fill="#0000c8"/><path d="M246.0 625.0l6 -2.4" stroke="#ff0000" stroke-width="1.6" fill="none"/><path d="M251.0 619.4l7.4 3.8l-6.6 1.2z" stroke="#ff0000" stroke-width="1.4" fill="none"/><path d="M593.7 400.3l5 -1l-2.5 -2.6z" fill="#804000"/><path d="M603.1 407.8l5 -1l-2.5 -2.6z" fill="#804000"/><path d="M612.6 415.4l5 -1l-2.5 -2.6z" fill="#804000"/><path d="M622.0 422.9l5 -1l-2.5 -2.6z" fill="#804000"/><path d="M631.5 430.5l5 -1l-2.5 -2.6z" fill="#804000"/><path d="M641.0 438.1l5 -1l-2.5 -2.6z" fill="#804000"/><path d="M650.4 445.6l5 -1l-2.5 -2.6z" fill="#804000"/><path d="M659.9 453.2l5 -1l-2.5 -2.6z" fill="#804000"/><path d="M669.3 460.7l5 -1l-2.5 -2.6z" fill="#804000"/><path d="M137.7 524.8l6 4M143.2 524.3l-5 5" stroke="#804000" stroke-width="1.3" fill="none"/><path d="M145.7 531.3l6 4M151.2 530.8l-5 5" stroke="#804000" stroke-width="1.3" fill="none"/><path d="M153.7 537.7l6 4M159.2 537.2l-5 5" stroke="#804000" stroke-width="1.3" fill="none"/><path d="M161.7 544.2l6 4M167.2 543.7l-5 5" stroke="#ff00ff" stroke-width="1.3" fill="none"/><path d="M169.7 550.6l6 4M175.2 550.1l-5 5" stroke="#ff00ff" stroke-width="1.3" fill="none"/><path d="M177.7 557.1l6 4M183.2 556.6l-5 5" stroke="#ff00ff" stroke-width="1.3" fill="none"/>
<path d="M428.1 464 L444.4 458.8 L453.2 465.8 L438.5 470.3 Z" fill="#ff0000"/><path d="M436 466.5 L440 466 L443.5 464.3 L447 468 L440 469.8 L439 470 L436.2 468.5 Z" fill="#fff"/>
<ellipse cx="451" cy="467.5" rx="24.5" ry="18.5" fill="none" stroke="#000" stroke-width="3"/>
</g></svg>
<div id="pwin"><div id="ptitle"><div id="picon"><i></i><b></b></div><span>NWB.STD - Plate</span></div>
<div id="pbody"><div id="ppanel"></div>
<div class="tab" style="left:8px;width:69px">Geometry</div><div class="tab on" style="left:77px;width:131px">Property <u></u>Constants</div><div class="tab" style="left:208px;width:105px">Center Stresses</div><div class="tab" style="left:313px;width:40px;text-align:left;padding-left:5px;border-right:none">Prin</div>
<div id="pno">Plate No : 1852</div>
<div id="pbox"><svg width="178" height="160" viewBox="0 0 178 160"><rect width="178" height="160" fill="#000"/><g fill="none" stroke="#ffff00" stroke-width="1"><rect x="10.5" y="10.5" width="158" height="139"/><circle cx="10.5" cy="10.5" r="3"/><circle cx="168.5" cy="10.5" r="3"/><circle cx="10.5" cy="149.5" r="3"/><circle cx="168.5" cy="149.5" r="3"/><path d="M89.5 125.5 V80.5 H141"/></g><g fill="#7fffff" font-family="'Liberation Mono','DejaVu Sans Mono',monospace" font-size="17px" textLength="34"><text x="12" y="26" textLength="34" lengthAdjust="spacingAndGlyphs">1854</text><text x="133" y="26" textLength="34" lengthAdjust="spacingAndGlyphs">1855</text><text x="12" y="146" textLength="34" lengthAdjust="spacingAndGlyphs">1885</text><text x="133" y="146" textLength="34" lengthAdjust="spacingAndGlyphs">1886</text><text x="140" y="77" font-size="15px">x</text><text x="89" y="122" font-size="16px">y</text></g></svg></div>
</div></div>
</div></div>
<div id="rwin"><div id="rtitle"><svg id="ricon" width="20" height="16" viewBox="0 0 20 16"><rect x="0.5" y="0.5" width="18" height="13.5" fill="#fff" stroke="#000"/><rect x="1" y="0" width="17" height="2.2" fill="#000"/><rect x="1" y="2.2" width="17" height="1.6" fill="#00e0e0"/><path d="M1 7 H18 M1 10.5 H18 M7 4 V14 M12.5 4 V14" stroke="#333" stroke-width="0.8"/><rect x="1" y="7.6" width="17" height="2.2" fill="#ffff00" opacity="0.9"/><path d="M1 15 H19.5 V2" stroke="#000" stroke-width="1" fill="none"/></svg><span class="wt dim">NWB.STD - Plate Center Stress:</span><div class="wb dimb" style="left:658px;width:50px"><div class="minbar" style="left:10.5px;top:8.5px;width:17px;height:6px"></div></div></div>
<div id="rclient">
<div id="tabrow">
<div class="nb" style="left:0px"><svg width="21" height="19" viewBox="0 0 21 19"><path d="M6 4 V14" stroke="#a0a0a0" stroke-width="1.6"/><path d="M14 4 L8 9 L14 14 Z" fill="#a0a0a0"/></svg></div>
<div class="nb" style="left:22px"><svg width="21" height="19" viewBox="0 0 21 19"><path d="M13 4 L7 9 L13 14 Z" fill="#a0a0a0"/></svg></div>
<div class="nb" style="left:44px"><svg width="21" height="19" viewBox="0 0 21 19"><path d="M8 3.5 L14.5 9 L8 14.5 Z" fill="#000"/></svg></div>
<div class="nb" style="left:66px"><svg width="21" height="19" viewBox="0 0 21 19"><path d="M15 4 V14" stroke="#000" stroke-width="1.8"/><path d="M7 3.5 L13.5 9 L7 14.5 Z" fill="#000"/></svg></div>
<div id="tabs"><svg width="620" height="21" viewBox="0 0 620 21" style="position:absolute;left:0;top:0"><rect x="0" y="0" width="620" height="21" fill="#fff"/><path d="M267 0.5 L271 21 H620 V0 Z" fill="#f0f0f0"/><g stroke="#000" stroke-width="1.1" fill="none"><path d="M-0.5 0 L5 21"/><path d="M262 21 L267 0.5 L269.5 21"/><path d="M405 21 L409.7 0.5 L412.2 21"/><path d="M551 21 L555.8 0.5 L558.3 21"/><path d="M267 0.5 H620"/></g></svg>
<span style="left:9px">Shear, Membrane and Bending</span><span style="left:273.5px">Stress Summary</span><span style="left:419px">Stress Envelope</span><span style="left:564px">Principal</span></div>
</div>
<div id="ttab">
<div class="hc" style="left:0;top:0;width:144px;height:22px"></div>
<div class="hc" style="left:144px;top:0;width:180px;height:22px">Shear (Local)</div>
<div class="hc" style="left:324px;top:0;width:270px;height:22px">Membrane (Local)</div>
<div class="hc" style="left:594px;top:0;width:270px;height:22px;text-align:left;padding-left:58px">Bending (Local)</div>
<div class="hc h2" style="left:684px;top:22px;width:90px;height:32px"></div>
<div class="hc h1" style="left:0px;top:22px;width:54px;height:32px">Plate</div>
<div class="hc h1" style="left:54px;top:22px;width:90px;height:32px">L/C</div>
<div class="hc h2" style="left:144px;top:22px;width:90px;height:32px"><div>SQX</div><div>psi</div></div>
<div class="hc h2" style="left:234px;top:22px;width:90px;height:32px"><div>SQY</div><div>psi</div></div>
<div class="hc h2" style="left:324px;top:22px;width:90px;height:32px"><div>SX</div><div>psi</div></div>
<div class="hc h2" style="left:414px;top:22px;width:90px;height:32px"><div>SY</div><div>psi</div></div>
<div class="hc h2" style="left:504px;top:22px;width:90px;height:32px"><div>SXY</div><div>psi</div></div>
<div class="hc h2" style="left:594px;top:22px;width:90px;height:32px"><div>MX</div><div>lb-in/in</div></div>
<div class="rc sel" style="left:0;top:54px;width:54px">1852</div>
<div class="rc lc sel" style="left:54px;top:54px;width:90px">1101 CASE1 E</div>
<div class="dc sel f1" style="left:144px;top:54px;width:90px">-0.394</div>
<div class="dc sel" style="left:234px;top:54px;width:90px">3.093</div>
<div class="dc sel" style="left:324px;top:54px;width:90px">6.381</div>
<div class="dc sel" style="left:414px;top:54px;width:90px">2.670</div>
<div class="dc sel" style="left:504px;top:54px;width:90px">1.188</div>
<div class="dc sel" style="left:594px;top:54px;width:90px">5286.197</div>
<div class="dc sel" style="left:684px;top:54px;width:90px"></div>
<div class="rc" style="left:0;top:73px;width:54px">1853</div>
<div class="rc lc" style="left:54px;top:73px;width:90px">1101 CASE1 E</div>
<div class="dc f1" style="left:144px;top:73px;width:90px">-0.570</div>
<div class="dc" style="left:234px;top:73px;width:90px">3.012</div>
<div class="dc" style="left:324px;top:73px;width:90px">6.740</div>
<div class="dc" style="left:414px;top:73px;width:90px">2.706</div>
<div class="dc" style="left:504px;top:73px;width:90px">1.224</div>
<div class="dc" style="left:594px;top:73px;width:90px">5330.948</div>
<div class="dc" style="left:684px;top:73px;width:90px"></div>
<div class="rc" style="left:0;top:92px;width:54px">1854</div>
<div class="rc lc" style="left:54px;top:92px;width:90px">1101 CASE1 E</div>
<div class="dc f1" style="left:144px;top:92px;width:90px">-0.783</div>
<div class="dc" style="left:234px;top:92px;width:90px">2.906</div>
<div class="dc" style="left:324px;top:92px;width:90px">7.117</div>
<div class="dc" style="left:414px;top:92px;width:90px">2.767</div>
<div class="dc" style="left:504px;top:92px;width:90px">1.227</div>
<div class="dc" style="left:594px;top:92px;width:90px">5329.454</div>
<div class="dc" style="left:684px;top:92px;width:90px"></div>
<div class="rc" style="left:0;top:111px;width:54px">1855</div>
<div class="rc lc" style="left:54px;top:111px;width:90px">1101 CASE1 E</div>
<div class="dc f1" style="left:144px;top:111px;width:90px">-1.043</div>
<div class="dc" style="left:234px;top:111px;width:90px">2.765</div>
<div class="dc" style="left:324px;top:111px;width:90px">7.486</div>
<div class="dc" style="left:414px;top:111px;width:90px">2.935</div>
<div class="dc" style="left:504px;top:111px;width:90px">1.167</div>
<div class="dc" style="left:594px;top:111px;width:90px">5283.575</div>
<div class="dc" style="left:684px;top:111px;width:90px"></div>
<div class="rc" style="left:0;top:130px;width:54px">1856</div>
<div class="rc lc" style="left:54px;top:130px;width:90px">1101 CASE1 E</div>
<div class="dc f1" style="left:144px;top:130px;width:90px">-1.367</div>
<div class="dc" style="left:234px;top:130px;width:90px">2.579</div>
<div class="dc" style="left:324px;top:130px;width:90px">7.807</div>
<div class="dc" style="left:414px;top:130px;width:90px">3.315</div>
<div class="dc" style="left:504px;top:130px;width:90px">1.031</div>
<div class="dc" style="left:594px;top:130px;width:90px">5197.515</div>
<div class="dc" style="left:684px;top:130px;width:90px"></div>
<div class="rc" style="left:0;top:149px;width:54px">1857</div>
<div class="rc lc" style="left:54px;top:149px;width:90px">1101 CASE1 E</div>
<div class="dc f1" style="left:144px;top:149px;width:90px">-1.785</div>
<div class="dc" style="left:234px;top:149px;width:90px">2.337</div>
<div class="dc" style="left:324px;top:149px;width:90px">8.040</div>
<div class="dc" style="left:414px;top:149px;width:90px">4.014</div>
<div class="dc" style="left:504px;top:149px;width:90px">0.820</div>
<div class="dc" style="left:594px;top:149px;width:90px">5055.939</div>
<div class="dc" style="left:684px;top:149px;width:90px"></div>
<div class="rc" style="left:0;top:168px;width:54px">1858</div>
<div class="rc lc" style="left:54px;top:168px;width:90px">1101 CASE1 E</div>
<div class="dc f1" style="left:144px;top:168px;width:90px">-2.336</div>
<div class="dc" style="left:234px;top:168px;width:90px">2.028</div>
<div class="dc" style="left:324px;top:168px;width:90px">8.153</div>
<div class="dc" style="left:414px;top:168px;width:90px">5.119</div>
<div class="dc" style="left:504px;top:168px;width:90px">0.546</div>
<div class="dc" style="left:594px;top:168px;width:90px">4809.055</div>
<div class="dc" style="left:684px;top:168px;width:90px"></div>
<div class="rc" style="left:0;top:187px;width:54px">1859</div>
<div class="rc lc" style="left:54px;top:187px;width:90px">1101 CASE1 E</div>
<div class="dc f1" style="left:144px;top:187px;width:90px">-3.061</div>
<div class="dc" style="left:234px;top:187px;width:90px">1.645</div>
<div class="dc" style="left:324px;top:187px;width:90px">8.117</div>
<div class="dc" style="left:414px;top:187px;width:90px">6.699</div>
<div class="dc" style="left:504px;top:187px;width:90px">0.222</div>
<div class="dc" style="left:594px;top:187px;width:90px">4367.118</div>
<div class="dc" style="left:684px;top:187px;width:90px"></div>
<div class="rc" style="left:0;top:206px;width:54px">1860</div>
<div class="rc lc" style="left:54px;top:206px;width:90px">1101 CASE1 E</div>
<div class="dc f1" style="left:144px;top:206px;width:90px">-4.007</div>
<div class="dc" style="left:234px;top:206px;width:90px">1.186</div>
<div class="dc" style="left:324px;top:206px;width:90px">7.910</div>
<div class="dc" style="left:414px;top:206px;width:90px">8.807</div>
<div class="dc" style="left:504px;top:206px;width:90px">-0.145</div>
<div class="dc" style="left:594px;top:206px;width:90px">3604.060</div>
<div class="dc" style="left:684px;top:206px;width:90px"></div>
<div class="rc" style="left:0;top:225px;width:54px">1861</div>
<div class="rc lc" style="left:54px;top:225px;width:90px">1101 CASE1 E</div>
<div class="dc f1" style="left:144px;top:225px;width:90px">-5.215</div>
<div class="dc" style="left:234px;top:225px;width:90px">0.663</div>
<div class="dc" style="left:324px;top:225px;width:90px">7.508</div>
<div class="dc" style="left:414px;top:225px;width:90px">11.502</div>
<div class="dc" style="left:504px;top:225px;width:90px">-0.550</div>
<div class="dc" style="left:594px;top:225px;width:90px">2368.194</div>
<div class="dc" style="left:684px;top:225px;width:90px"></div>
<div class="rc" style="left:0;top:244px;width:54px">1862</div>
<div class="rc lc" style="left:54px;top:244px;width:90px">1101 CASE1 E</div>
<div class="dc f1" style="left:144px;top:244px;width:90px">-6.718</div>
<div class="dc" style="left:234px;top:244px;width:90px">0.103</div>
<div class="dc" style="left:324px;top:244px;width:90px">6.892</div>
<div class="dc" style="left:414px;top:244px;width:90px">14.838</div>
<div class="dc" style="left:504px;top:244px;width:90px">-0.985</div>
<div class="dc" style="left:594px;top:244px;width:90px">487.335</div>
<div class="dc" style="left:684px;top:244px;width:90px"></div>
<div class="rc" style="left:0;top:263px;width:54px">1863</div>
<div class="rc lc" style="left:54px;top:263px;width:90px">1101 CASE1 E</div>
<div class="dc f1" style="left:144px;top:263px;width:90px">-8.539</div>
<div class="dc" style="left:234px;top:263px;width:90px">-0.467</div>
<div class="dc" style="left:324px;top:263px;width:90px">6.051</div>
<div class="dc" style="left:414px;top:263px;width:90px">18.860</div>
<div class="dc" style="left:504px;top:263px;width:90px">-1.448</div>
<div class="dc" style="left:594px;top:263px;width:90px">-2228.950</div>
<div class="dc" style="left:684px;top:263px;width:90px"></div>
<div class="rc" style="left:0;top:282px;width:54px">1864</div>
<div class="rc lc" style="left:54px;top:282px;width:90px">1101 CASE1 E</div>
<div class="dc f1" style="left:144px;top:282px;width:90px">-10.633</div>
<div class="dc" style="left:234px;top:282px;width:90px">-0.687</div>
<div class="dc" style="left:324px;top:282px;width:90px">4.991</div>
<div class="dc" style="left:414px;top:282px;width:90px">23.586</div>
<div class="dc" style="left:504px;top:282px;width:90px">-1.977</div>
<div class="dc" style="left:594px;top:282px;width:90px">-5967.351</div>
<div class="dc" style="left:684px;top:282px;width:90px"></div>
</div>
<div id="hscroll"><div id="thumb"></div></div>
<div id="btab">
<div class="rc" style="left:0;top:0px;width:54px"></div>
<div class="rc lc" style="left:54px;top:0px;width:90px"></div>
<div class="rc" style="left:144px;top:0px;width:90px">1886</div>
<div class="dc f1" style="left:234px;top:0px;width:90px">-0.418</div>
<div class="dc" style="left:324px;top:0px;width:90px">3.061</div>
<div class="dc" style="left:414px;top:0px;width:90px">6.613</div>
<div class="dc" style="left:504px;top:0px;width:90px">2.714</div>
<div class="dc" style="left:594px;top:0px;width:90px">0.934</div>
<div class="dc" style="left:684px;top:0px;width:90px"></div>
<div class="rc" style="left:0;top:19px;width:54px"></div>
<div class="rc lc" style="left:54px;top:19px;width:90px"></div>
<div class="rc" style="left:144px;top:19px;width:90px">1885</div>
<div class="dc f1" style="left:234px;top:19px;width:90px">-0.418</div>
<div class="dc" style="left:324px;top:19px;width:90px">3.125</div>
<div class="dc" style="left:414px;top:19px;width:90px">6.133</div>
<div class="dc" style="left:504px;top:19px;width:90px">2.655</div>
<div class="dc" style="left:594px;top:19px;width:90px">0.962</div>
<div class="dc" style="left:684px;top:19px;width:90px"></div>
<div class="rc" style="left:0;top:38px;width:54px">1853</div>
<div class="rc lc" style="left:54px;top:38px;width:90px">1101 CASE1 E</div>
<div class="rc" style="left:144px;top:38px;width:90px">1855</div>
<div class="dc f1" style="left:234px;top:38px;width:90px">-0.562</div>
<div class="dc" style="left:324px;top:38px;width:90px">3.065</div>
<div class="dc" style="left:414px;top:38px;width:90px">6.469</div>
<div class="dc" style="left:504px;top:38px;width:90px">2.681</div>
<div class="dc" style="left:594px;top:38px;width:90px">1.474</div>
<div class="dc" style="left:684px;top:38px;width:90px"></div>
<div class="rc" style="left:0;top:57px;width:54px"></div>
<div class="rc lc" style="left:54px;top:57px;width:90px"></div>
<div class="rc" style="left:144px;top:57px;width:90px">1856</div>
<div class="dc f1" style="left:234px;top:57px;width:90px">-0.562</div>
<div class="dc" style="left:324px;top:57px;width:90px">2.959</div>
<div class="dc" style="left:414px;top:57px;width:90px">6.972</div>
<div class="dc" style="left:504px;top:57px;width:90px">2.732</div>
<div class="dc" style="left:594px;top:57px;width:90px">1.476</div>
<div class="dc" style="left:684px;top:57px;width:90px"></div>
<div class="rc" style="left:0;top:76px;width:54px"></div>
<div class="rc lc" style="left:54px;top:76px;width:90px"></div>
<div class="rc" style="left:144px;top:76px;width:90px">1887</div>
<div class="dc f1" style="left:234px;top:76px;width:90px">-0.577</div>
<div class="dc" style="left:324px;top:76px;width:90px">2.959</div>
<div class="dc" style="left:414px;top:76px;width:90px">7.012</div>
<div class="dc" style="left:504px;top:76px;width:90px">2.731</div>
<div class="dc" style="left:594px;top:76px;width:90px">0.973</div>
<div class="dc" style="left:684px;top:76px;width:90px"></div>
<div class="rc" style="left:0;top:95px;width:54px"></div>
<div class="rc lc" style="left:54px;top:95px;width:90px"></div>
<div class="rc" style="left:144px;top:95px;width:90px">1886</div>
<div class="dc f1" style="left:234px;top:95px;width:90px">-0.577</div>
<div class="dc" style="left:324px;top:95px;width:90px">3.065</div>
<div class="dc" style="left:414px;top:95px;width:90px">6.509</div>
<div class="dc" style="left:504px;top:95px;width:90px">2.680</div>
<div class="dc" style="left:594px;top:95px;width:90px">0.971</div>
<div class="dc" style="left:684px;top:95px;width:90px"></div>
</div>
<svg id="redcirc" width="110" height="100" viewBox="0 0 110 100"><ellipse cx="56" cy="35" rx="43.5" ry="32.5" fill="none" stroke="#dc1c24" stroke-width="3.1" transform="rotate(8 56 35)"/></svg>
</div></div>
<div id="note1">局部坐标系<b>z</b>轴向下</div>
<div id="note2"><div>正值<b>MX</b>为<i></i>沿<b>x</b> 轴的弯矩,</div><div>使截面下侧（<b>+z</b> 方向，板的底部）受拉,</div><div>上侧（<b>-z</b> 方向，板的顶部）受压。</div><div>弯曲形态为 下凸</div></div>
<div id="white"><svg width="701" height="154" viewBox="0 0 701 154"><g fill="none" stroke="#00ff00" stroke-width="1.3" shape-rendering="crispEdges"><polygon fill="#00ff00" stroke="none" points="32.6,48.4 41.8,48.3 50.9,48.2 60.0,48.1 69.2,48.0 78.3,47.9 87.5,47.8 96.6,47.7 105.8,47.6 114.9,47.5 124.1,47.4 133.2,47.2 133.2,62.9 124.1,62.2 114.9,61.6 105.8,60.9 96.6,60.2 87.5,59.5 78.3,58.9 69.2,58.2 60.0,57.5 50.9,56.8 41.8,56.2 32.6,55.5"/><polygon fill="#00ff00" stroke="none" points="572.4,40.1 581.6,40.0 590.7,39.8 599.9,39.6 609.0,39.4 618.2,39.3 627.3,39.1 636.5,38.9 645.6,38.7 654.8,38.5 663.9,38.4 666.5,38.3 666.5,45.5 663.9,45.8 654.8,46.7 645.6,47.6 636.5,48.5 627.3,49.4 618.2,50.4 609.0,51.3 599.9,52.5 590.7,53.6 581.6,54.8 572.4,56.0"/><path d="M32.6 48.4L41.8 48.3L50.9 48.2L60.0 48.1L69.2 48.0L78.3 47.9L87.5 47.8L96.6 47.7L105.8 47.6L114.9 47.5L124.1 47.4L133.2 47.2L142.4 47.1L151.5 47.0L160.7 46.9L169.8 46.7L179.0 46.6L188.1 46.4L197.3 46.2L206.4 46.1L215.6 45.9L224.7 45.8L233.9 45.6L243.0 45.4L252.2 45.3L261.3 45.1L270.5 44.9L279.6 44.8L288.8 44.6L297.9 44.4L307.1 44.3L316.2 44.1L325.4 43.9L334.5 43.8L343.7 43.6L352.8 43.4L362.0 43.3L371.1 43.1L380.3 43.0L389.4 42.9L398.6 42.7L407.7 42.6L416.9 42.4L426.0 42.3L435.2 42.2L444.3 42.0L453.5 41.9L462.6 41.7L471.8 41.6L480.9 41.4L490.1 41.3L499.2 41.2L508.4 41.0L517.5 40.9L526.7 40.8L535.8 40.6L545.0 40.5L554.1 40.4L563.3 40.3L572.4 40.1L581.6 40.0L590.7 39.8L599.9 39.6L609.0 39.4L618.2 39.3L627.3 39.1L636.5 38.9L645.6 38.7L654.8 38.5L663.9 38.4" /><path d="M32.6 49.4L41.8 49.4L50.9 49.4L60.0 49.4L69.2 49.4L78.3 49.4L87.5 49.4L96.6 49.4L105.8 49.4L114.9 49.4L124.1 49.5L133.2 49.5L142.4 49.5L151.5 49.5L160.7 49.4L169.8 49.4L179.0 49.3L188.1 49.3L197.3 49.2L206.4 49.2L215.6 49.1L224.7 49.1L233.9 49.0L243.0 49.0L252.2 48.9L261.3 48.9L270.5 48.8L279.6 48.7L288.8 48.5L297.9 48.4L307.1 48.3L316.2 48.1L325.4 48.0L334.5 47.8L343.7 47.7L352.8 47.5L362.0 47.3L371.1 47.1L380.3 46.9L389.4 46.8L398.6 46.6L407.7 46.4L416.9 46.2L426.0 46.0L435.2 45.8L444.3 45.6L453.5 45.4L462.6 45.2L471.8 45.0L480.9 44.7L490.1 44.5L499.2 44.3L508.4 44.1L517.5 43.8L526.7 43.6L535.8 43.4L545.0 43.1L554.1 42.9L563.3 42.6L572.4 42.4L581.6 42.1L590.7 41.8L599.9 41.4L609.0 41.1L618.2 40.8L627.3 40.5L636.5 40.3L645.6 40.0L654.8 39.7L663.9 39.4" /><path d="M32.6 50.2L41.8 50.3L50.9 50.4L60.0 50.5L69.2 50.6L78.3 50.7L87.5 50.8L96.6 50.9L105.8 51.0L114.9 51.0L124.1 51.1L133.2 51.2L142.4 51.3L151.5 51.4L160.7 51.5L169.8 51.5L179.0 51.6L188.1 51.6L197.3 51.6L206.4 51.7L215.6 51.7L224.7 51.8L233.9 51.8L243.0 51.8L252.2 51.9L261.3 51.9L270.5 51.9L279.6 51.8L288.8 51.7L297.9 51.6L307.1 51.5L316.2 51.3L325.4 51.2L334.5 51.1L343.7 51.0L352.8 50.7L362.0 50.5L371.1 50.3L380.3 50.1L389.4 49.9L398.6 49.7L407.7 49.4L416.9 49.2L426.0 49.0L435.2 48.7L444.3 48.5L453.5 48.2L462.6 47.9L471.8 47.7L480.9 47.4L490.1 47.1L499.2 46.8L508.4 46.5L517.5 46.2L526.7 45.9L535.8 45.5L545.0 45.2L554.1 44.9L563.3 44.5L572.4 44.2L581.6 43.8L590.7 43.3L599.9 42.9L609.0 42.5L618.2 42.1L627.3 41.7L636.5 41.3L645.6 41.0L654.8 40.6L663.9 40.2" /><path d="M32.6 51.0L41.8 51.1L50.9 51.3L60.0 51.5L69.2 51.7L78.3 51.8L87.5 52.0L96.6 52.2L105.8 52.3L114.9 52.5L124.1 52.7L133.2 52.9L142.4 53.0L151.5 53.2L160.7 53.4L169.8 53.5L179.0 53.6L188.1 53.7L197.3 53.9L206.4 54.0L215.6 54.1L224.7 54.2L233.9 54.4L243.0 54.5L252.2 54.6L261.3 54.7L270.5 54.8L279.6 54.7L288.8 54.6L297.9 54.5L307.1 54.4L316.2 54.3L325.4 54.2L334.5 54.1L343.7 54.0L352.8 53.7L362.0 53.5L371.1 53.3L380.3 53.0L389.4 52.8L398.6 52.6L407.7 52.3L416.9 52.0L426.0 51.7L435.2 51.4L444.3 51.1L453.5 50.9L462.6 50.5L471.8 50.2L480.9 49.8L490.1 49.5L499.2 49.1L508.4 48.8L517.5 48.4L526.7 47.9L535.8 47.5L545.0 47.1L554.1 46.7L563.3 46.3L572.4 45.8L581.6 45.3L590.7 44.8L599.9 44.2L609.0 43.7L618.2 43.3L627.3 42.8L636.5 42.4L645.6 41.9L654.8 41.5L663.9 41.0" /><path d="M32.6 51.7L41.8 51.9L50.9 52.2L60.0 52.4L69.2 52.7L78.3 52.9L87.5 53.2L96.6 53.4L105.8 53.7L114.9 53.9L124.1 54.2L133.2 54.4L142.4 54.7L151.5 54.9L160.7 55.2L169.8 55.4L179.0 55.6L188.1 55.8L197.3 56.0L206.4 56.2L215.6 56.4L224.7 56.6L233.9 56.8L243.0 57.0L252.2 57.2L261.3 57.4L270.5 57.5L279.6 57.4L288.8 57.4L297.9 57.3L307.1 57.2L316.2 57.1L325.4 57.1L334.5 57.0L343.7 56.9L352.8 56.6L362.0 56.3L371.1 56.1L380.3 55.8L389.4 55.6L398.6 55.3L407.7 55.0L416.9 54.6L426.0 54.3L435.2 54.0L444.3 53.7L453.5 53.3L462.6 52.9L471.8 52.5L480.9 52.1L490.1 51.7L499.2 51.3L508.4 50.9L517.5 50.4L526.7 49.9L535.8 49.4L545.0 49.0L554.1 48.5L563.3 48.0L572.4 47.4L581.6 46.8L590.7 46.1L599.9 45.5L609.0 44.9L618.2 44.4L627.3 43.8L636.5 43.3L645.6 42.8L654.8 42.3L663.9 41.7" /><path d="M32.6 52.3L41.8 52.7L50.9 53.0L60.0 53.3L69.2 53.6L78.3 54.0L87.5 54.3L96.6 54.6L105.8 55.0L114.9 55.3L124.1 55.6L133.2 55.9L142.4 56.3L151.5 56.6L160.7 56.9L169.8 57.2L179.0 57.4L188.1 57.7L197.3 58.0L206.4 58.3L215.6 58.6L224.7 58.8L233.9 59.1L243.0 59.4L252.2 59.7L261.3 60.0L270.5 60.1L279.6 60.1L288.8 60.0L297.9 60.0L307.1 59.9L316.2 59.9L325.4 59.8L334.5 59.8L343.7 59.6L352.8 59.3L362.0 59.1L371.1 58.8L380.3 58.5L389.4 58.2L398.6 57.9L407.7 57.5L416.9 57.2L426.0 56.8L435.2 56.5L444.3 56.1L453.5 55.7L462.6 55.3L471.8 54.8L480.9 54.3L490.1 53.9L499.2 53.4L508.4 53.0L517.5 52.4L526.7 51.8L535.8 51.3L545.0 50.7L554.1 50.1L563.3 49.6L572.4 48.9L581.6 48.2L590.7 47.5L599.9 46.7L609.0 46.0L618.2 45.4L627.3 44.8L636.5 44.2L645.6 43.6L654.8 43.1L663.9 42.5" /><path d="M32.6 53.0L41.8 53.4L50.9 53.8L60.0 54.2L69.2 54.6L78.3 55.0L87.5 55.4L96.6 55.8L105.8 56.2L114.9 56.6L124.1 57.0L133.2 57.4L142.4 57.8L151.5 58.2L160.7 58.6L169.8 58.9L179.0 59.3L188.1 59.6L197.3 60.0L206.4 60.3L215.6 60.7L224.7 61.0L233.9 61.4L243.0 61.8L252.2 62.1L261.3 62.5L270.5 62.7L279.6 62.6L288.8 62.6L297.9 62.6L307.1 62.5L316.2 62.5L325.4 62.5L334.5 62.4L343.7 62.3L352.8 62.0L362.0 61.7L371.1 61.4L380.3 61.1L389.4 60.8L398.6 60.4L407.7 60.1L416.9 59.7L426.0 59.3L435.2 58.9L444.3 58.5L453.5 58.1L462.6 57.5L471.8 57.0L480.9 56.5L490.1 56.0L499.2 55.5L508.4 55.0L517.5 54.3L526.7 53.7L535.8 53.1L545.0 52.4L554.1 51.8L563.3 51.1L572.4 50.4L581.6 49.6L590.7 48.8L599.9 47.9L609.0 47.1L618.2 46.5L627.3 45.8L636.5 45.1L645.6 44.5L654.8 43.8L663.9 43.1" /><path d="M32.6 53.6L41.8 54.1L50.9 54.6L60.0 55.1L69.2 55.5L78.3 56.0L87.5 56.5L96.6 56.9L105.8 57.4L114.9 57.9L124.1 58.3L133.2 58.8L142.4 59.3L151.5 59.7L160.7 60.2L169.8 60.6L179.0 61.0L188.1 61.5L197.3 61.9L206.4 62.3L215.6 62.8L224.7 63.2L233.9 63.6L243.0 64.0L252.2 64.5L261.3 64.9L270.5 65.2L279.6 65.1L288.8 65.1L297.9 65.1L307.1 65.1L316.2 65.1L325.4 65.1L334.5 65.0L343.7 64.9L352.8 64.6L362.0 64.3L371.1 63.9L380.3 63.6L389.4 63.3L398.6 62.9L407.7 62.5L416.9 62.1L426.0 61.6L435.2 61.2L444.3 60.8L453.5 60.3L462.6 59.8L471.8 59.2L480.9 58.6L490.1 58.1L499.2 57.5L508.4 56.9L517.5 56.2L526.7 55.5L535.8 54.8L545.0 54.1L554.1 53.4L563.3 52.7L572.4 51.8L581.6 50.9L590.7 50.0L599.9 49.1L609.0 48.2L618.2 47.5L627.3 46.7L636.5 46.0L645.6 45.3L654.8 44.5L663.9 43.8" /><path d="M32.6 54.3L41.8 54.8L50.9 55.4L60.0 55.9L69.2 56.4L78.3 57.0L87.5 57.5L96.6 58.0L105.8 58.6L114.9 59.1L124.1 59.7L133.2 60.2L142.4 60.7L151.5 61.3L160.7 61.8L169.8 62.3L179.0 62.8L188.1 63.3L197.3 63.8L206.4 64.3L215.6 64.8L224.7 65.3L233.9 65.8L243.0 66.3L252.2 66.8L261.3 67.3L270.5 67.6L279.6 67.6L288.8 67.6L297.9 67.6L307.1 67.6L316.2 67.6L325.4 67.6L334.5 67.6L343.7 67.5L352.8 67.1L362.0 66.8L371.1 66.4L380.3 66.1L389.4 65.8L398.6 65.4L407.7 64.9L416.9 64.4L426.0 64.0L435.2 63.5L444.3 63.0L453.5 62.5L462.6 61.9L471.8 61.3L480.9 60.7L490.1 60.1L499.2 59.4L508.4 58.8L517.5 58.1L526.7 57.3L535.8 56.5L545.0 55.7L554.1 54.9L563.3 54.2L572.4 53.2L581.6 52.2L590.7 51.2L599.9 50.2L609.0 49.2L618.2 48.5L627.3 47.7L636.5 46.9L645.6 46.1L654.8 45.3L663.9 44.5" /><path d="M32.6 54.9L41.8 55.5L50.9 56.1L60.0 56.7L69.2 57.3L78.3 57.9L87.5 58.5L96.6 59.1L105.8 59.7L114.9 60.3L124.1 61.0L133.2 61.6L142.4 62.2L151.5 62.8L160.7 63.4L169.8 63.9L179.0 64.5L188.1 65.1L197.3 65.6L206.4 66.2L215.6 66.8L224.7 67.3L233.9 67.9L243.0 68.5L252.2 69.0L261.3 69.6L270.5 70.0L279.6 70.0L288.8 70.0L297.9 70.0L307.1 70.0L316.2 70.1L325.4 70.1L334.5 70.1L343.7 70.0L352.8 69.6L362.0 69.3L371.1 68.9L380.3 68.5L389.4 68.2L398.6 67.7L407.7 67.2L416.9 66.7L426.0 66.2L435.2 65.7L444.3 65.2L453.5 64.7L462.6 64.1L471.8 63.4L480.9 62.7L490.1 62.0L499.2 61.4L508.4 60.7L517.5 59.9L526.7 59.0L535.8 58.2L545.0 57.3L554.1 56.5L563.3 55.6L572.4 54.6L581.6 53.5L590.7 52.4L599.9 51.4L609.0 50.3L618.2 49.4L627.3 48.6L636.5 47.7L645.6 46.8L654.8 46.0L663.9 45.1" /><path d="M32.6 55.5L41.8 56.2L50.9 56.8L60.0 57.5L69.2 58.2L78.3 58.9L87.5 59.5L96.6 60.2L105.8 60.9L114.9 61.6L124.1 62.2L133.2 62.9L142.4 63.6L151.5 64.2L160.7 64.9L169.8 65.5L179.0 66.2L188.1 66.8L197.3 67.4L206.4 68.1L215.6 68.7L224.7 69.4L233.9 70.0L243.0 70.6L252.2 71.3L261.3 71.9L270.5 72.3L279.6 72.4L288.8 72.4L297.9 72.4L307.1 72.5L316.2 72.5L325.4 72.5L334.5 72.6L343.7 72.5L352.8 72.1L362.0 71.7L371.1 71.3L380.3 70.9L389.4 70.5L398.6 70.1L407.7 69.6L416.9 69.0L426.0 68.5L435.2 67.9L444.3 67.4L453.5 66.9L462.6 66.1L471.8 65.4L480.9 64.7L490.1 64.0L499.2 63.3L508.4 62.5L517.5 61.6L526.7 60.7L535.8 59.8L545.0 58.9L554.1 58.0L563.3 57.1L572.4 56.0L581.6 54.8L590.7 53.6L599.9 52.5L609.0 51.3L618.2 50.4L627.3 49.4L636.5 48.5L645.6 47.6L654.8 46.7L663.9 45.8" /><path d="M32.6 48.4V55.5M50.9 48.2V56.8M69.2 48.0V58.2M87.5 47.8V59.5M105.8 47.6V60.9M124.1 47.4V62.2M142.4 47.1V63.6M160.7 46.9V64.9M179.0 46.6V66.2M197.3 46.2V67.4M215.6 45.9V68.7M233.9 45.6V70.0M252.2 45.3V71.3M270.5 44.9V72.3M288.8 44.6V72.4M307.1 44.3V72.5M325.4 43.9V72.5M343.7 43.6V72.5M362.0 43.3V71.7M380.3 43.0V70.9M398.6 42.7V70.1M416.9 42.4V69.0M435.2 42.2V67.9M453.5 41.9V66.9M471.8 41.6V65.4M490.1 41.3V64.0M508.4 41.0V62.5M526.7 40.8V60.7M545.0 40.5V58.9M563.3 40.3V57.1M581.6 40.0V54.8M599.9 39.6V52.5M618.2 39.3V50.4M636.5 38.9V48.5M654.8 38.5V46.7"/><path stroke-width="3.4" d="M32.6 54.0L41.8 54.7L50.9 55.3L60.0 56.0L69.2 56.7L78.3 57.4L87.5 58.0L96.6 58.7L105.8 59.4L114.9 60.1L124.1 60.7L133.2 61.4L142.4 62.1L151.5 62.7L160.7 63.4L169.8 64.0L179.0 64.7L188.1 65.3L197.3 65.9L206.4 66.6L215.6 67.2L224.7 67.9L233.9 68.5L243.0 69.1L252.2 69.8L261.3 70.4L270.5 70.8L279.6 70.9L288.8 70.9L297.9 70.9L307.1 71.0L316.2 71.0L325.4 71.0L334.5 71.1L343.7 71.0L352.8 70.6L362.0 70.2L371.1 69.8L380.3 69.4L389.4 69.0L398.6 68.6L407.7 68.1L416.9 67.5L426.0 67.0L435.2 66.4L444.3 65.9L453.5 65.4L462.6 64.6L471.8 63.9L480.9 63.2L490.1 62.5L499.2 61.8L508.4 61.0L517.5 60.1L526.7 59.2L535.8 58.3L545.0 57.4L554.1 56.5L563.3 55.6L572.4 54.5L581.6 53.3L590.7 52.1L599.9 51.0L609.0 49.8L618.2 48.9L627.3 47.9L636.5 47.0L645.6 46.1L654.8 45.2L663.9 44.3"/><polygon fill="#00ff00" points="31,84 50,85 181.6,91.4 181.6,98.7 150,96.5 100,91 50,86"/><path d="M150 94.5H180M160 96.3H181" stroke="#fff" stroke-width="0.8"/></g><path d="M45 50.5H100M120 51H170M190 52H260" stroke="#fff" stroke-width="0.8" stroke-dasharray="14 3"/></svg></div>
<div id="art"><div style="top:0;height:14px;background:linear-gradient(#aebdd4,#c9d5e6)"></div><div style="top:14px;height:23px;background:#dde5f0;border-left:1px solid #a9b6c9"></div><div style="top:37px;height:3px;background:#555"></div><div style="top:40px;height:76px;background:#f0f0f0"></div><div style="top:62px;height:1px;background:#000"></div><div style="top:84px;height:1px;background:#000"></div><div style="top:62px;left:5px;width:1px;height:54px;background:#000"></div><div style="top:116px;height:19px;background:#000"></div></div>
<div id="vline"></div>
</body></html>
